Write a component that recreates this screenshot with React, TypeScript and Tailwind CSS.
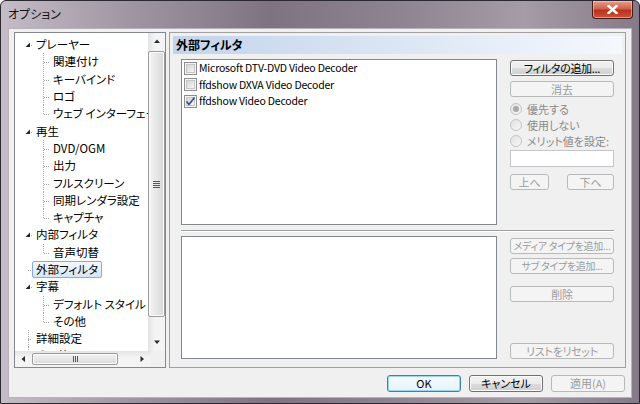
import clsx from "clsx";

type TreeItem = {
  label: string;
  level: 0 | 1;
  expander?: boolean;
  last?: boolean;
  selected?: boolean;
  line?: boolean;
};

const treeItems: TreeItem[] = [
  { label: "プレーヤー", level: 0, expander: true },
  { label: "関連付け", level: 1 },
  { label: "キーバインド", level: 1 },
  { label: "ロゴ", level: 1 },
  { label: "ウェブ インターフェース", level: 1, last: true },
  { label: "再生", level: 0, expander: true },
  { label: "DVD/OGM", level: 1 },
  { label: "出力", level: 1 },
  { label: "フルスクリーン", level: 1 },
  { label: "同期レンダラ設定", level: 1 },
  { label: "キャプチャ", level: 1, last: true },
  { label: "内部フィルタ", level: 0, expander: true },
  { label: "音声切替", level: 1, last: true },
  { label: "外部フィルタ", level: 0, selected: true },
  { label: "字幕", level: 0, expander: true },
  { label: "デフォルト スタイル", level: 1 },
  { label: "その他", level: 1, last: true },
  { label: "詳細設定", level: 0, line: true },
  { label: "その他", level: 0, line: true },
];

const filters = [
  { name: "Microsoft DTV-DVD Video Decoder", checked: false },
  { name: "ffdshow DXVA Video Decoder", checked: false },
  { name: "ffdshow Video Decoder", checked: true },
];

const DOT = "#a5a5a5";

const TreeRow = ({ item }: { item: TreeItem }) => {
  const w = item.level ? 34 : 17;
  return (
    <div className="flex h-[17.3px] shrink-0 items-center whitespace-nowrap">
      <svg width={w} height={17} className="shrink-0">
        {item.level === 0 && item.expander && (
          <>
            <polygon points="15,6.5 15,11 10.5,11" fill="#262626" />
            <line x1="16" y1="9.5" x2="17" y2="9.5" stroke={DOT} />
          </>
        )}
        {item.level === 0 && !item.expander && (
          <>
            {item.line && (
              <line x1="13.5" y1="0" x2="13.5" y2="17" stroke={DOT} strokeDasharray="1 1" />
            )}
            <line x1="13" y1="9.5" x2="17" y2="9.5" stroke={DOT} strokeDasharray="1 1" />
          </>
        )}
        {item.level === 1 && (
          <>
            <line
              x1="28.5"
              y1="0"
              x2="28.5"
              y2={item.last ? 9.5 : 17}
              stroke={DOT}
              strokeDasharray="1 1"
            />
            <line x1="29" y1="9.5" x2="34" y2="9.5" stroke={DOT} strokeDasharray="1 1" />
          </>
        )}
      </svg>
      <span
        className={clsx(
          "rounded-[2px] border px-[3px] leading-[15px]",
          item.selected
            ? "border-[#84acdd] bg-[linear-gradient(180deg,#f3f8fe,#d5e6fb)]"
            : "border-transparent"
        )}
      >
        {item.label}
      </span>
    </div>
  );
};

const Arrow = ({ dir }: { dir: "up" | "down" | "left" | "right" }) => {
  const pts = {
    up: "1,5 4,1.5 7,5",
    down: "1,1.5 4,5 7,1.5",
    left: "5,1 1.5,4 5,7",
    right: "1.5,1 5,4 1.5,7",
  }[dir];
  const horiz = dir === "left" || dir === "right";
  return (
    <svg width={horiz ? 7 : 8} height={horiz ? 8 : 7}>
      <polygon points={pts} fill="#2c2c2c" />
    </svg>
  );
};

const VScrollbar = () => (
  <div className="flex w-[17px] shrink-0 flex-col bg-[linear-gradient(90deg,#e3e3e3,#f4f4f4_40%,#f4f4f4)]">
    <div className="flex h-[17px] items-center justify-center">
      <Arrow dir="up" />
    </div>
    <div className="flex flex-1 flex-col pb-[17px] pt-[1px]">
      <div className="flex flex-1 items-center justify-center rounded-[2px] border border-[#9b9b9b] bg-[linear-gradient(90deg,#f4f4f4,#e7e7e7_50%,#d8d8d8)] shadow-[inset_0_0_0_1px_#fbfbfb]">
        <div className="flex w-[7px] flex-col gap-[1px]">
          <div className="h-[1px] bg-[#5a5a5a]" />
          <div className="h-[1px] bg-[#5a5a5a]" />
          <div className="h-[1px] bg-[#5a5a5a]" />
          <div className="h-[1px] bg-[#5a5a5a]" />
        </div>
      </div>
    </div>
    <div className="flex h-[17px] items-center justify-center">
      <Arrow dir="down" />
    </div>
  </div>
);

const HScrollbar = () => (
  <div className="flex h-[16px] bg-[linear-gradient(180deg,#e3e3e3,#f4f4f4_40%,#f4f4f4)]">
    <div className="flex w-[17px] items-center justify-center">
      <Arrow dir="left" />
    </div>
    <div className="flex flex-1 py-[2px] pr-[16px]">
      <div className="flex w-[86px] items-center justify-center gap-[1px] rounded-[2px] border border-[#9b9b9b] bg-[linear-gradient(180deg,#f4f4f4,#e7e7e7_50%,#d8d8d8)] shadow-[inset_0_0_0_1px_#fbfbfb]">
        <div className="h-[6px] w-[1px] bg-[#5a5a5a]" />
        <div className="h-[6px] w-[1px] bg-[#5a5a5a]" />
        <div className="h-[6px] w-[1px] bg-[#5a5a5a]" />
      </div>
    </div>
    <div className="flex w-[17px] items-center justify-center">
      <Arrow dir="right" />
    </div>
  </div>
);

const Checkbox = ({ checked }: { checked: boolean }) => (
  <div className="flex h-[13px] w-[13px] shrink-0 items-center justify-center border border-[#8e8f8f] bg-[#f4f4f4]">
    <div className="flex h-[9px] w-[9px] items-center justify-center border border-[#c6c6c6] bg-[linear-gradient(135deg,#d5d5d5,#f6f6f6)]">
      {checked && (
        <svg width="11" height="11" viewBox="0 0 11 11" className="shrink-0">
          <path d="M1.5 5.5 L4 8.5 L9.5 1.5" fill="none" stroke="#2d4fa0" strokeWidth="1.7" />
        </svg>
      )}
    </div>
  </div>
);

const Radio = ({ label, checked }: { label: string; checked?: boolean }) => (
  <div className="flex h-[16px] items-center gap-[5px] whitespace-nowrap text-[11px] text-[#8a8a8a]">
    <div className="flex h-[12px] w-[12px] shrink-0 items-center justify-center rounded-full border border-[#c4c4c4] bg-[linear-gradient(135deg,#e2e2e2,#f7f7f7)]">
      {checked && <div className="h-[6px] w-[6px] rounded-full bg-[#a8a8a8]" />}
    </div>
    <span>{label}</span>
  </div>
);

type BtnKind = "normal" | "disabled" | "default";

const Btn = ({
  children,
  kind = "normal",
  className,
}: {
  children: React.ReactNode;
  kind?: BtnKind;
  className?: string;
}) => (
  <div
    className={clsx(
      "flex items-center justify-center whitespace-nowrap rounded-[3px] border leading-none",
      kind === "normal" &&
        "border-[#707070] bg-[linear-gradient(180deg,#f2f2f2_0%,#ebebeb_50%,#dddddd_50%,#cfcfcf_100%)] text-black shadow-[inset_0_0_0_1px_#fbfbfb]",
      kind === "disabled" && "border-[#b7b9bb] bg-[#f4f4f4] text-[#9c9c9c]",
      kind === "default" &&
        "border-[#3c7fb1] bg-[linear-gradient(180deg,#f6fbfe,#e6f3fb)] text-black shadow-[inset_0_0_0_1px_#9bd6f4]",
      className
    )}
  >
    {children}
  </div>
);

export default function App() {
  return (
    <div className="flex h-[404px] w-[640px] flex-col overflow-hidden rounded-t-[6px] border border-[#2b2830] bg-[linear-gradient(90deg,#c4bcc6_0%,#a096a3_20%,#7f7382_42%,#8e8390_62%,#a59ca7_82%,#857a88_100%)] font-['Noto_Sans_CJK_JP','Noto_Sans',sans-serif] text-[12px] text-black [font-feature-settings:'palt']">
      {/* title bar */}
      <div className="flex h-[27px] shrink-0 items-start justify-between pl-[7px]">
        <span className="mt-[5px] text-[12px] leading-[16px] text-[#111]">オプション</span>
        <div className="mr-[6px] flex h-[18px] w-[41px] items-center justify-center rounded-b-[4px] border border-t-0 border-[#4a1a14] bg-[linear-gradient(180deg,#e5a08f_0%,#d0624b_45%,#b8321b_55%,#c9553a_100%)] shadow-[inset_0_0_0_1px_rgba(255,220,210,0.5)]">
          <svg width="11" height="9" viewBox="0 0 11 9">
            <path d="M1.5 1 L9.5 8 M9.5 1 L1.5 8" stroke="#fff" strokeWidth="2.4" strokeLinecap="square" />
          </svg>
        </div>
      </div>

      {/* client */}
      <div className="mx-[7px] mb-[6px] flex flex-1 flex-col border border-[#b9b1bb] bg-[#f0f0f0] px-[5px] pb-[5px] pt-[3px]">
        <div className="flex h-[336px] gap-[3px]">
          {/* tree */}
          <div className="flex w-[152px] shrink-0 flex-col border border-[#828790] bg-white text-[11.5px]">
            <div className="flex min-h-0 flex-1">
              <div className="flex flex-1 flex-col overflow-hidden pt-[3px]">
                {treeItems.map((item, i) => (
                  <TreeRow key={i} item={item} />
                ))}
              </div>
              <VScrollbar />
            </div>
            <div className="flex">
              <div className="flex-1">
                <HScrollbar />
              </div>
              <div className="w-[17px] bg-[#f0f0f0]" />
            </div>
          </div>

          {/* page */}
          <div className="flex flex-1 flex-col border border-[#a0a0a0]">
            <div className="mx-[3px] mt-[3px] flex h-[18px] items-center bg-[linear-gradient(90deg,#c3d4ea,#dbe6f4_50%,#f5f8fc)] px-[3px] font-bold">
              外部フィルタ
            </div>
            <div className="flex flex-1 flex-col pb-[8px] pl-[11px] pt-[5px]">
              <div className="flex h-[166px] gap-[13px]">
                <div className="w-[316px] border border-[#828790] bg-white pl-[2px]">
                  {filters.map((f) => (
                    <div key={f.name} className="flex h-[16.5px] items-center gap-[2px] whitespace-nowrap">
                      <Checkbox checked={f.checked} />
                      <span className="text-[10.5px] leading-[14px] tracking-[-0.2px]">{f.name}</span>
                    </div>
                  ))}
                </div>
                <div className="flex w-[104px] shrink-0 flex-col text-[11px]">
                  <Btn className="mt-[1px] h-[16px] tracking-[-0.3px]">フィルタの追加...</Btn>
                  <Btn kind="disabled" className="mt-[5px] h-[16px]">
                    消去
                  </Btn>
                  <div className="mt-[4px] flex flex-col">
                    <Radio label="優先する" checked />
                    <Radio label="使用しない" />
                    <Radio label="メリット値を設定:" />
                  </div>
                  <div className="mt-[1px] h-[17px] border border-[#c4c6c9] bg-white" />
                  <div className="mt-[7px] flex justify-between">
                    <Btn kind="disabled" className="h-[16px] w-[39px]">
                      上へ
                    </Btn>
                    <Btn kind="disabled" className="h-[16px] w-[47px]">
                      下へ
                    </Btn>
                  </div>
                </div>
              </div>
              <div className="mt-[5px] h-[2px] w-[433px] border-b border-t border-b-white border-t-[#a0a0a0]" />
              <div className="mt-[4px] flex h-[123px] gap-[13px]">
                <div className="w-[316px] border border-[#828790] bg-white" />
                <div className="flex w-[104px] shrink-0 flex-col text-[10px] tracking-[-0.3px]">
                  <Btn kind="disabled" className="mt-[2px] h-[16px]">
                    メディア タイプを追加...
                  </Btn>
                  <Btn kind="disabled" className="mt-[4px] h-[16px]">
                    サブ タイプを追加...
                  </Btn>
                  <Btn kind="disabled" className="mt-[12px] h-[16px] text-[11px]">
                    削除
                  </Btn>
                  <Btn kind="disabled" className="mt-auto h-[16px] text-[11px]">
                    リストをリセット
                  </Btn>
                </div>
              </div>
            </div>
          </div>
        </div>

        {/* dialog buttons */}
        <div className="mt-[7px] flex justify-end gap-[8px] pr-[1px] text-[11px]">
          <Btn kind="default" className="h-[17px] w-[74px]">
            OK
          </Btn>
          <Btn className="h-[17px] w-[74px]">キャンセル</Btn>
          <Btn kind="disabled" className="h-[17px] w-[74px]">
            適用(A)
          </Btn>
        </div>
      </div>
    </div>
  );
}
